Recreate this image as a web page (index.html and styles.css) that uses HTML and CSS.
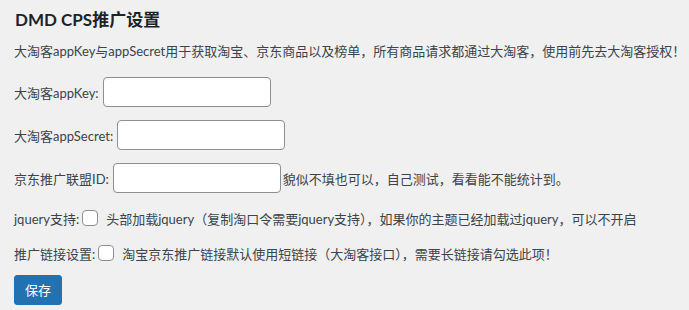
FILE: index.html
```html
<!DOCTYPE html>
<html lang="zh-CN">
<head>
<meta charset="utf-8">
<title>DMD CPS推广设置</title>
<link rel="stylesheet" href="styles.css">
</head>
<body>
<div class="wrap">
  <h2 class="title">DMD CPS推广设置</h2>
  <p class="desc">大淘客appKey与appSecret用于获取淘宝、京东商品以及榜单，所有商品请求都通过大淘客，使用前先去大淘客授权！</p>
  <div class="row row-first"><span class="lbl">大淘客appKey:</span><input class="field" type="text"></div>
  <div class="row"><span class="lbl">大淘客appSecret:</span><input class="field" type="text"></div>
  <div class="row"><span class="lbl">京东推广联盟ID:</span><input class="field" type="text"><span class="note">貌似不填也可以，自己测试，看看能不能统计到。</span></div>
  <div class="row check-row check-first"><span class="lbl-c">jquery支持:</span><input class="box" type="checkbox"><span class="ctext">头部加载jquery（复制淘口令需要jquery支持），如果你的主题已经加载过jquery，可以不开启</span></div>
  <div class="row check-row"><span class="lbl-c">推广链接设置:</span><input class="box" type="checkbox"><span class="ctext">淘宝京东推广链接默认使用短链接（大淘客接口），需要长链接请勾选此项！</span></div>
  <div class="actions"><button class="btn" type="button">保存</button></div>
</div>
</body>
</html>
```
FILE: styles.css
```css
html, body {
  margin: 0;
  padding: 0;
  background: #f0f0f1;
}
body {
  font-family: Lato, "Noto Sans CJK SC", sans-serif;
  font-size: 13px;
  color: #3c434a;
}
.wrap {
  padding: 0 14px;
  display: flex;
  flex-direction: column;
  align-items: flex-start;
}
.title {
  margin: 8px 0 0 1px;
  font-size: 17px;
  line-height: 24px;
  font-weight: 700;
  color: #1d2327;
}
.desc {
  margin: 9px 0 0 0;
  line-height: 20px;
  white-space: nowrap;
}
.row {
  height: 30px;
  margin-top: 13px;
  display: flex;
  align-items: center;
  white-space: nowrap;
}
.row-first {
  margin-top: 16px;
}
.lbl {
  margin-right: 4px;
}
.field {
  box-sizing: border-box;
  width: 168px;
  height: 30px;
  margin: 0;
  padding: 0 8px;
  border: 1px solid #8c8f94;
  border-radius: 4px;
  background: #fff;
  font: inherit;
}
.note {
  margin-left: 2px;
}
.check-row {
  height: 22px;
}
.check-first {
  margin-top: 14px;
}
.box {
  -webkit-appearance: none;
  appearance: none;
  box-sizing: border-box;
  width: 16px;
  height: 16px;
  margin: 0 0 0 3px;
  border: 1px solid #8c8f94;
  border-radius: 4px;
  background: #fff;
}
.ctext {
  margin-left: 8px;
}
.actions {
  margin-top: 11px;
}
.btn {
  box-sizing: border-box;
  height: 30px;
  min-width: 48px;
  padding: 0 10px;
  border: 1px solid #2271b1;
  border-radius: 3px;
  background: #2271b1;
  color: #fff;
  font: inherit;
  font-size: 13px;
  line-height: 28px;
}
```
